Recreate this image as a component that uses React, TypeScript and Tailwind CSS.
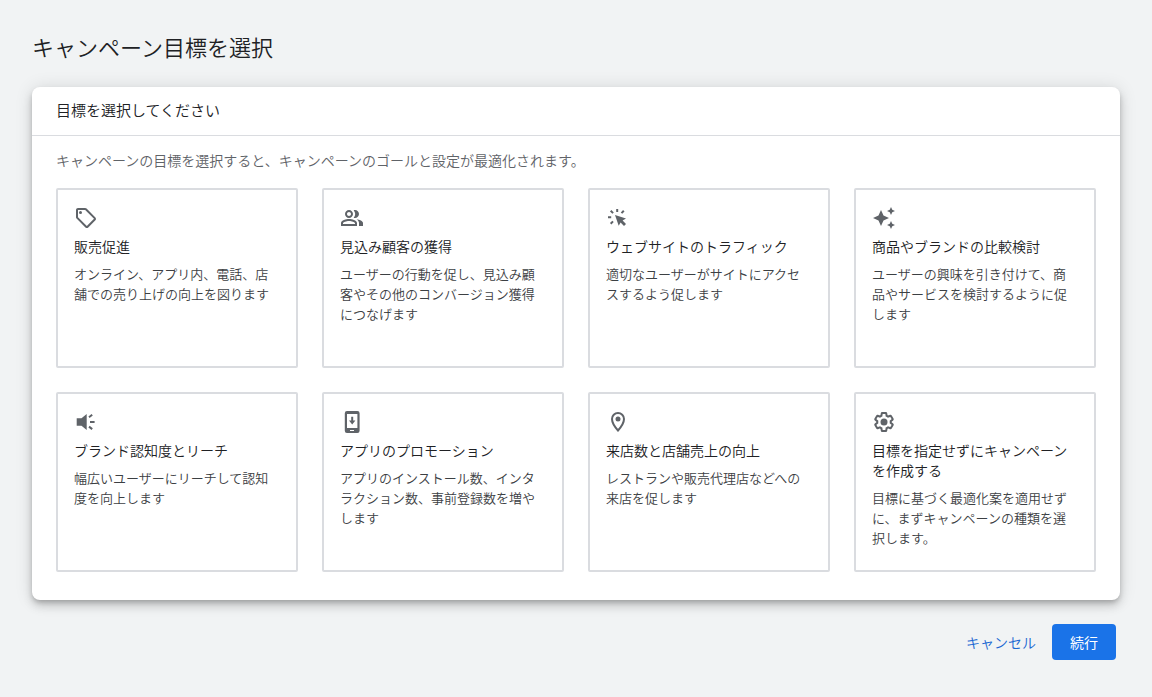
import type { ReactNode } from 'react'
import { MdAutoAwesome, MdOutlinePeopleAlt, MdOutlineSell } from 'react-icons/md'

const ClickIcon = () => (
  <svg viewBox="0 0 24 24" className="size-6" fill="currentColor" aria-hidden="true">
    <path d="M9 9l11 3.6-3.4 1.9 3.4 3.4-2 2-3.4-3.4-1.9 3.3z" />
    <path
      d="M11.2 3v3M2 11.2h3.2M4.7 4.7l2.4 2.4M17.8 4.7l-2.3 2.4M4.7 17.8l2.3-2.4"
      stroke="currentColor"
      strokeWidth="2"
    />
  </svg>
)

const SpeakerIcon = () => (
  <svg viewBox="0 0 24 24" className="size-6" fill="currentColor" aria-hidden="true">
    <path d="M2.7 8.3h4.8L12.7 4v16l-5.2-4.3H2.7z" />
    <path d="M15 7.2l3.2-2.5M16 12h4.6M15 16.6l3.2 2.5" stroke="currentColor" strokeWidth="2" />
  </svg>
)

const PhoneIcon = () => (
  <svg viewBox="0 0 24 24" className="size-6" fill="currentColor" aria-hidden="true">
    <path
      fillRule="evenodd"
      d="M7 1h10.4a2.2 2.2 0 0 1 2.2 2.2v17.6a2.2 2.2 0 0 1-2.2 2.2H7a2.2 2.2 0 0 1-2.2-2.2V3.2A2.2 2.2 0 0 1 7 1zM7 4v14h10.4V4zM10 20v1h4v-1z"
    />
    <path d="M11.2 6.8h2v3.6h2.2L12.2 14.6 9 10.4h2.2z" />
  </svg>
)

const PinIcon = () => (
  <svg viewBox="0 0 24 24" className="size-6" aria-hidden="true">
    <path
      fill="none"
      stroke="currentColor"
      strokeWidth="2"
      d="M12 3C8.7 3 6 5.7 6 9c0 4.2 4.4 9.7 6 11.5C13.6 18.700 18 13.200 18 9c0-3.300-2.700-6-6-6z"
    />
    <circle cx="12" cy="9" r="2.5" fill="currentColor" />
  </svg>
)

const GearIcon = () => (
  <svg viewBox="0 0 24 24" className="size-6" aria-hidden="true">
    <path
      transform="translate(1.2 1.2) scale(.9)"
      fill="none"
      stroke="currentColor"
      strokeWidth="2.2"
      d="M19.43 12.98c.04-.32.07-.64.07-.98s-.03-.66-.07-.98l2.11-1.65c.19-.15.24-.42.12-.64l-2-3.46a.5.5 0 0 0-.61-.22l-2.49 1c-.52-.4-1.08-.73-1.69-.98l-.38-2.65A.49.49 0 0 0 14 2h-4c-.25 0-.46.18-.49.42l-.38 2.65c-.61.25-1.17.59-1.69.98l-2.49-1a.5.5 0 0 0-.61.22l-2 3.46c-.13.22-.07.49.12.64l2.11 1.65c-.04.32-.07.65-.07.98s.03.66.07.98l-2.11 1.65c-.19.15-.24.42-.12.64l2 3.46c.12.22.39.3.61.22l2.49-1c.52.4 1.08.73 1.69.98l.38 2.65c.03.24.24.42.49.42h4c.25 0 .46-.18.49-.42l.38-2.65c.61-.25 1.17-.59 1.69-.98l2.49 1c.23.09.49 0 .61-.22l2-3.46c.12-.22.07-.49-.12-.64z"
    />
    <circle cx="12" cy="12" r="3.5" fill="currentColor" />
  </svg>
)

type Goal = { icon: ReactNode; title: string; text: string }

const goals: Goal[] = [
  {
    icon: <MdOutlineSell className="size-6" />,
    title: '販売促進',
    text: 'オンライン、アプリ内、電話、店舗での売り上げの向上を図ります'
  },
  {
    icon: <MdOutlinePeopleAlt className="size-6" />,
    title: '見込み顧客の獲得',
    text: 'ユーザーの行動を促し、見込み顧客やその他のコンバージョン獲得につなげます'
  },
  {
    icon: <ClickIcon />,
    title: 'ウェブサイトのトラフィック',
    text: '適切なユーザーがサイトにアクセスするよう促します'
  },
  {
    icon: <MdAutoAwesome className="size-6" />,
    title: '商品やブランドの比較検討',
    text: 'ユーザーの興味を引き付けて、商品やサービスを検討するように促します'
  },
  {
    icon: <SpeakerIcon />,
    title: 'ブランド認知度とリーチ',
    text: '幅広いユーザーにリーチして認知度を向上します'
  },
  {
    icon: <PhoneIcon />,
    title: 'アプリのプロモーション',
    text: 'アプリのインストール数、インタラクション数、事前登録数を増やします'
  },
  {
    icon: <PinIcon />,
    title: '来店数と店舗売上の向上',
    text: 'レストランや販売代理店などへの来店を促します'
  },
  {
    icon: <GearIcon />,
    title: '目標を指定せずにキャンペーンを作成する',
    text: '目標に基づく最適化案を適用せずに、まずキャンペーンの種類を選択します。'
  }
]

function GoalCard({ icon, title, text }: Goal) {
  return (
    <button
      type="button"
      className="flex min-h-[180px] cursor-pointer flex-col items-start rounded-xs border-2 border-[#dadce0] bg-white p-4 text-left hover:border-[#1a73e8]"
    >
      <span className="text-[#5f6368]">{icon}</span>
      <span className="mt-1.5 text-sm leading-5 text-[#202124]">{title}</span>
      <span className="mt-2 text-[13px] leading-5 text-[#3c4043]">{text}</span>
    </button>
  )
}

export default function App() {
  return (
    <main
      lang="ja"
      className="min-h-screen bg-[#f1f3f4] px-8 pt-[30px] pb-8 font-['Noto_Sans_CJK_JP',sans-serif] font-[350] text-[#202124]"
    >
      <h1 className="text-[22px] leading-8">キャンペーン目標を選択</h1>

      <section className="mt-[25px] rounded-lg bg-white shadow-[0_3px_5px_-1px_rgba(0,0,0,0.2),0_6px_10px_0_rgba(0,0,0,0.14),0_1px_18px_0_rgba(0,0,0,0.12)]">
        <h2 className="border-b border-[#dadce0] px-6 pt-[11px] pb-[13px] text-[15px] leading-6">
          目標を選択してください
        </h2>
        <div className="px-6 pt-3.5 pb-7">
          <p className="text-sm leading-5 text-[#5f6368]">
            キャンペーンの目標を選択すると、キャンペーンのゴールと設定が最適化されます。
          </p>
          <div className="mt-[18px] grid grid-cols-2 gap-6 md:grid-cols-4">
            {goals.map((goal) => (
              <GoalCard key={goal.title} {...goal} />
            ))}
          </div>
        </div>
      </section>

      <div className="mt-6 flex justify-end px-1">
        <button type="button" className="h-9 cursor-pointer px-4 text-sm text-[#1967d2]">
          キャンセル
        </button>
        <button
          type="button"
          className="h-9 w-16 cursor-pointer rounded bg-[#1a73e8] text-sm font-normal text-white"
        >
          続行
        </button>
      </div>
    </main>
  )
}
